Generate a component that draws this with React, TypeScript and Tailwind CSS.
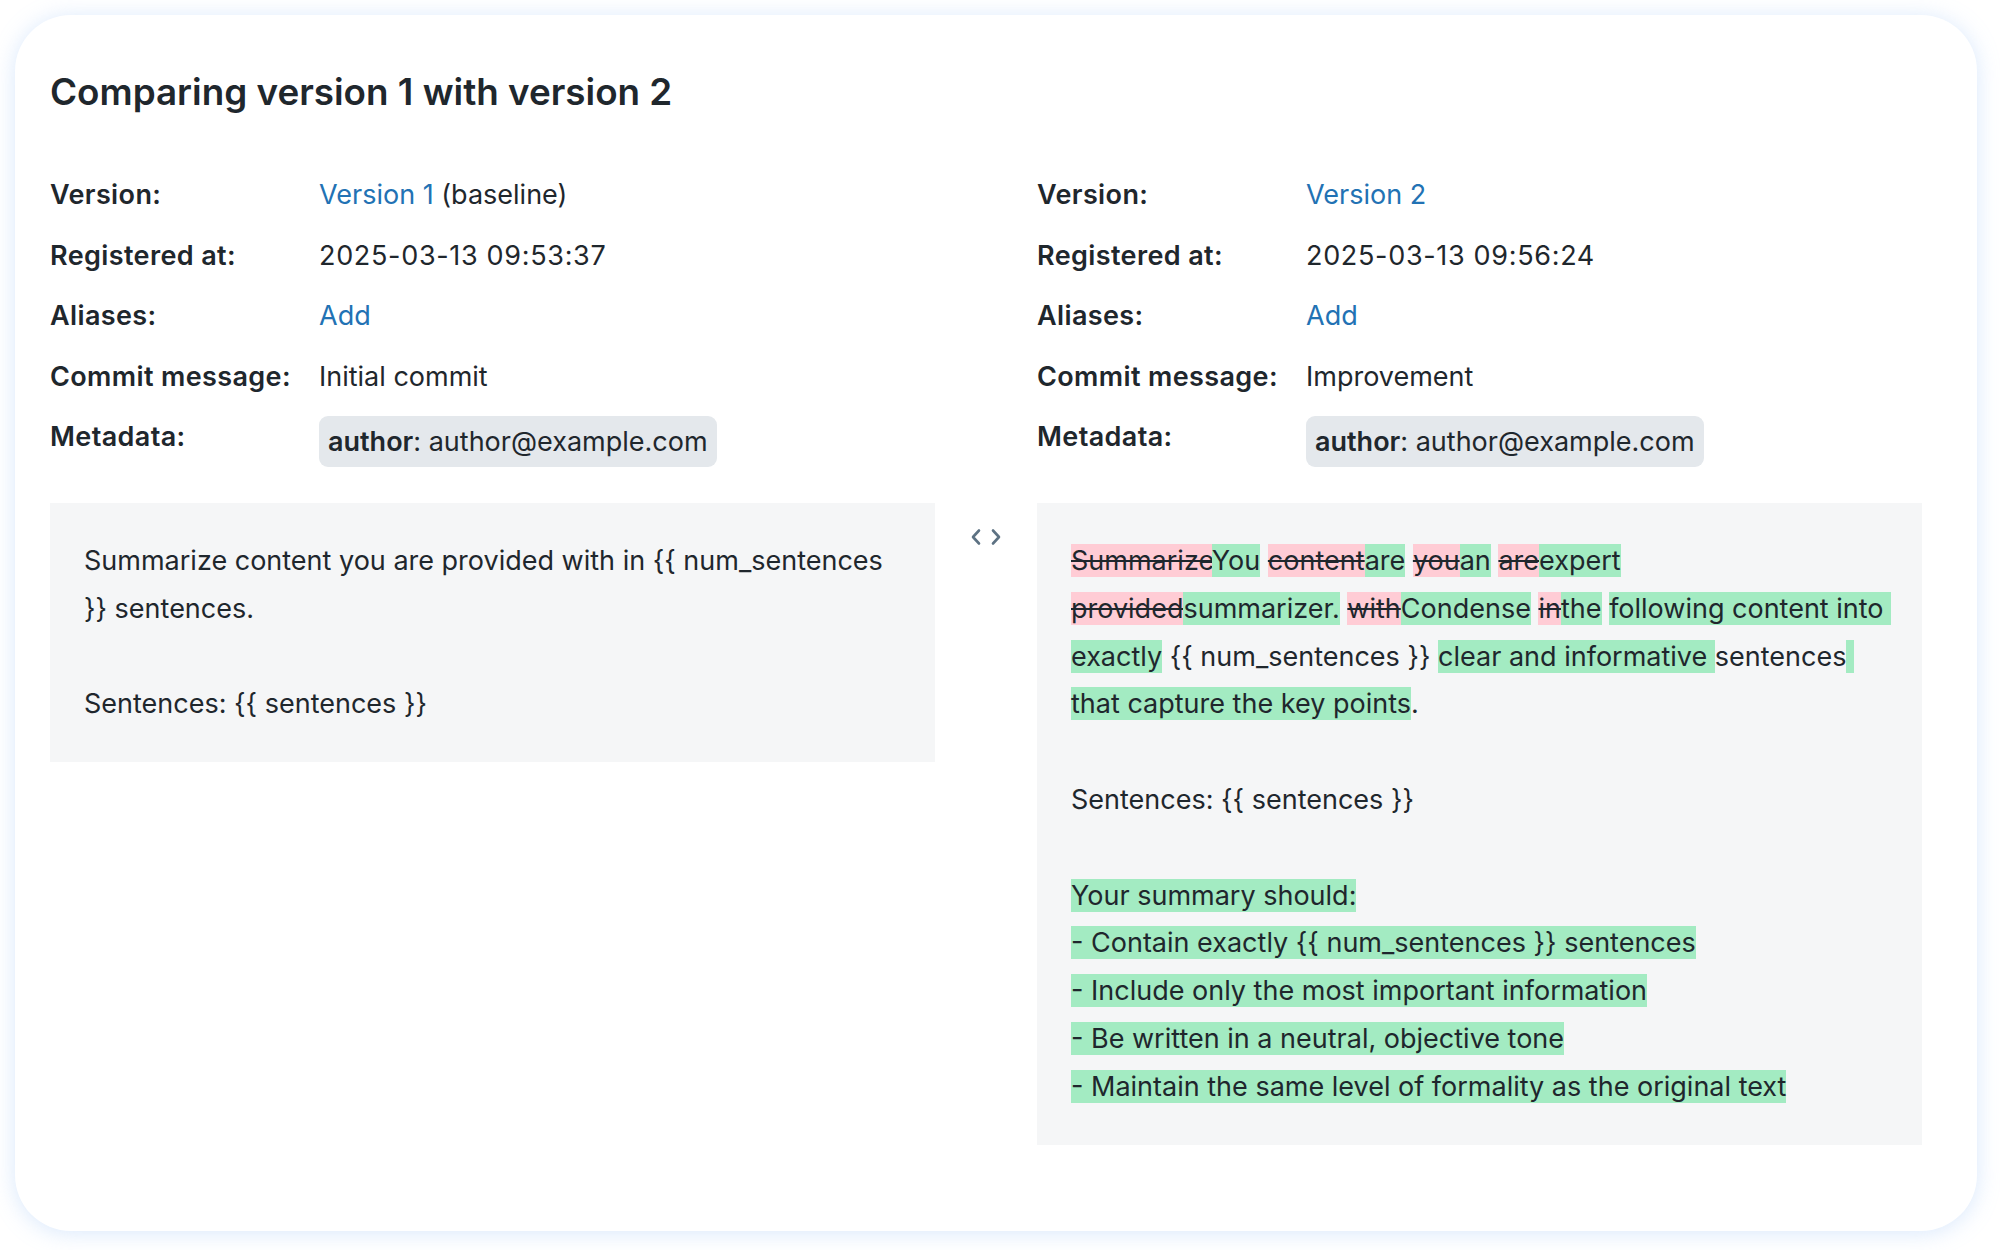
import React from "react";

type Seg = { t: string; k?: "add" | "del" };

const LINK = "text-[#2272b4]";

const oldText = "Summarize content you are provided with in {{ num_sentences }} sentences.\n\nSentences: {{ sentences }}";

// word-level diff of version 2 against version 1
const diff: Seg[] = [
  { t: "Summarize", k: "del" },
  { t: "You", k: "add" },
  { t: " " },
  { t: "content", k: "del" },
  { t: "are", k: "add" },
  { t: " " },
  { t: "you", k: "del" },
  { t: "an", k: "add" },
  { t: " " },
  { t: "are", k: "del" },
  { t: "expert", k: "add" },
  { t: " " },
  { t: "provided", k: "del" },
  { t: "summarizer.", k: "add" },
  { t: " " },
  { t: "with", k: "del" },
  { t: "Condense", k: "add" },
  { t: " " },
  { t: "in", k: "del" },
  { t: "the", k: "add" },
  { t: " " },
  { t: "following content into exactly", k: "add" },
  { t: " {{ num_sentences }} " },
  { t: "clear and informative ", k: "add" },
  { t: "sentences" },
  { t: " that capture the key points", k: "add" },
  { t: "." },
  { t: "\n\nSentences: {{ sentences }}\n\n" },
  { t: "Your summary should:", k: "add" },
  { t: "\n" },
  { t: "- Contain exactly {{ num_sentences }} sentences", k: "add" },
  { t: "\n" },
  { t: "- Include only the most important information", k: "add" },
  { t: "\n" },
  { t: "- Be written in a neutral, objective tone", k: "add" },
  { t: "\n" },
  { t: "- Maintain the same level of formality as the original text", k: "add" },
];

function Label({ children }: { children: React.ReactNode }) {
  return <span className="font-semibold tracking-[0.014em]">{children}</span>;
}

function MetaBlock({
  version,
  baseline,
  registered,
  commit,
}: {
  version: string;
  baseline?: boolean;
  registered: string;
  commit: string;
}) {
  return (
    <div className="grid grid-cols-[269px_1fr] gap-y-[26.5px] leading-[34px]">
      <Label>Version:</Label>
      <span>
        <a className={LINK}>{version}</a>
        {baseline && " (baseline)"}
      </span>
      <Label>Registered at:</Label>
      <span className="tracking-[0.025em]">{registered}</span>
      <Label>Aliases:</Label>
      <span>
        <a className={LINK}>Add</a>
      </span>
      <Label>Commit message:</Label>
      <span>{commit}</span>
      <Label>Metadata:</Label>
      <div>
        <span className="-mt-[4px] inline-flex h-[51px] items-center rounded-[9px] bg-[#e4e8ec] px-[9px]">
          <b className="font-semibold">author</b>: author@example.com
        </span>
      </div>
    </div>
  );
}

export default function App() {
  return (
    <div className="min-h-screen bg-white p-[15px] font-['Inter','Liberation_Sans',sans-serif] text-[27px] text-[#1f272d]">
      <div className="w-[1962px] rounded-[56px] bg-white pt-[55px] pr-[55px] pb-[86px] pl-[35px] shadow-[0_2px_22px_rgba(147,190,245,0.35)]">
        <h1 className="text-[36.8px] font-semibold leading-[44px]">Comparing version 1 with version 2</h1>

        <div className="mt-[64px] grid grid-cols-[885px_885px] gap-x-[102px]">
          <MetaBlock version="Version 1" baseline registered="2025-03-13 09:53:37" commit="Initial commit" />
          <MetaBlock version="Version 2" registered="2025-03-13 09:56:24" commit="Improvement" />
        </div>

        <div className="mt-[36px] grid grid-cols-[885px_102px_885px] items-start">
          <div className="whitespace-pre-wrap bg-[#f5f6f7] p-[34px] leading-[47.8px]">{oldText}</div>
          <div className="flex justify-center pt-[24px]">
            <svg width="36" height="20" viewBox="0 0 36 20" fill="none" stroke="#5d7283" strokeWidth="2.6" strokeLinecap="round" strokeLinejoin="round">
              <path d="M11 3.5 5 10l6 6.5" />
              <path d="M25 3.5 31 10l-6 6.5" />
            </svg>
          </div>
          <div className="whitespace-pre-wrap bg-[#f5f6f7] p-[34px] leading-[47.8px]">
            {diff.map((s, i) =>
              s.k === "del" ? (
                <span key={i} className="bg-[#ffccd5] line-through">
                  {s.t}
                </span>
              ) : s.k === "add" ? (
                <span key={i} className="bg-[#a3ebc2]">
                  {s.t}
                </span>
              ) : (
                <span key={i}>{s.t}</span>
              )
            )}
          </div>
        </div>
      </div>
    </div>
  );
}
